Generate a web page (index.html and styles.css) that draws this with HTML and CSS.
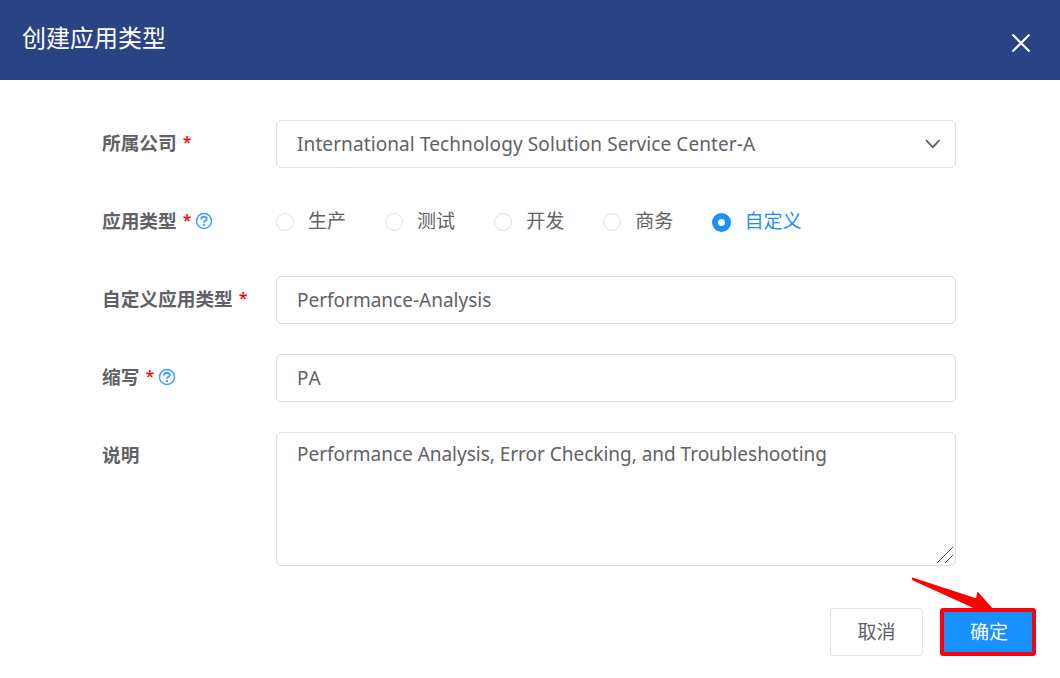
FILE: index.html
```html
<!DOCTYPE html>
<html lang="zh-CN">
<head>
<meta charset="utf-8">
<title>创建应用类型</title>
<link rel="stylesheet" href="styles.css">
</head>
<body>
<div class="dialog">
  <header class="header">
    <h1 class="title">创建应用类型</h1>
    <button class="close" aria-label="关闭"><svg width="20" height="20" viewBox="0 0 20 20"><path d="M1.5 1.5l17 17M18.5 1.5l-17 17" stroke="#fff" stroke-width="2.2" fill="none"/></svg></button>
  </header>
  <form class="form">
    <div class="row">
      <div class="label"><span>所属公司</span><span class="star">*</span></div>
      <div class="field select"><span class="value company">International Technology Solution Service Center-A</span><svg width="16" height="10" viewBox="0 0 16 10"><path d="M1 1.2l6.8 7 6.8-7" stroke="#606266" stroke-width="1.8" fill="none"/></svg></div>
    </div>
    <div class="row">
      <div class="label"><span>应用类型</span><span class="star">*</span><svg class="help" width="18" height="18" viewBox="0 0 18 18"><circle cx="9" cy="9" r="7.5" fill="none" stroke="#409eff" stroke-width="1.5"/><path d="M6.2 7.4C6.2 3.9 11.8 4.1 11.8 7c0 1.7-2.8 1.8-2.8 3.7" fill="none" stroke="#409eff" stroke-width="1.9"/><circle cx="9" cy="12.9" r="1.15" fill="#409eff"/></svg></div>
      <div class="radios">
        <label class="radio"><i class="dot"></i><span>生产</span></label>
        <label class="radio"><i class="dot"></i><span>测试</span></label>
        <label class="radio"><i class="dot"></i><span>开发</span></label>
        <label class="radio"><i class="dot"></i><span>商务</span></label>
        <label class="radio checked"><i class="dot"></i><span>自定义</span></label>
      </div>
    </div>
    <div class="row">
      <div class="label"><span>自定义应用类型</span><span class="star">*</span></div>
      <div class="field"><span class="value">Performance-Analysis</span></div>
    </div>
    <div class="row">
      <div class="label"><span>缩写</span><span class="star">*</span><svg class="help" width="18" height="18" viewBox="0 0 18 18"><circle cx="9" cy="9" r="7.5" fill="none" stroke="#409eff" stroke-width="1.5"/><path d="M6.2 7.4C6.2 3.9 11.8 4.1 11.8 7c0 1.7-2.8 1.8-2.8 3.7" fill="none" stroke="#409eff" stroke-width="1.9"/><circle cx="9" cy="12.9" r="1.15" fill="#409eff"/></svg></div>
      <div class="field"><span class="value short">PA</span></div>
    </div>
    <div class="row">
      <div class="label"><span>说明</span></div>
      <div class="field area"><span class="value note">Performance Analysis, Error Checking, and Troubleshooting</span><svg class="grip" width="18" height="18" viewBox="0 0 18 18"><path d="M1 17L17 1M9 17l8-8" stroke="#505050" stroke-width="1"/></svg></div>
    </div>
  </form>
  <footer class="footer">
    <button class="btn">取消</button>
    <button class="btn primary">确定</button>
  </footer>
  <svg class="arrow" width="86" height="34" viewBox="0 0 86 34"><path d="M2.5.5L66 21.3 67.5 14.5 84 33H62L64.5 31.5 3 3.5Q.8 1.5 2.5.5z" fill="#f00"/></svg>
</div>
</body>
</html>
```
FILE: styles.css
```css
* { box-sizing: border-box; }
body { margin: 0; background: #fff; color: #606266; font: 19px/28px "Noto Sans", "Noto Sans CJK SC", sans-serif; }
.dialog { position: relative; width: 1060px; height: 678px; }
.header { height: 80px; padding: 0 29px 0 22px; background: #2a4385; color: #fff; display: flex; justify-content: space-between; align-items: center; }
.title { margin: 0 0 6px; font-size: 24px; font-weight: 400; line-height: 36px; font-family: "Noto Sans CJK SC", sans-serif; }
.close { padding: 0; margin-top: 6px; border: 0; background: none; display: flex; }
.form { padding: 40px 104px 0 102px; display: flex; flex-direction: column; gap: 30px; }
.row { display: grid; grid-template-columns: 174px 680px; min-height: 48px; }
.label { height: 46px; display: flex; align-items: center; font: bold 18.7px/28px "Noto Sans CJK SC", sans-serif; }
.label > span { padding-bottom: 2px; }
.star { margin-left: 6px; color: #f00; font: 600 16px/28px "Open Sans", sans-serif; }
.help { margin-left: 3.5px; }
.field { height: 48px; padding: 0 20px; border: 1px solid #dcdfe6; border-radius: 5px; display: flex; align-items: center; }
.select { justify-content: space-between; padding-right: 14px; }
.value { white-space: nowrap; }
.company { letter-spacing: .1px; }
.short { letter-spacing: 1px; }
.note { letter-spacing: -.02px; }
.area { position: relative; height: 134px; align-items: flex-start; padding-top: 7px; }
.grip { position: absolute; right: 1px; bottom: 1px; }
.radios { display: flex; align-items: center; gap: 39.1px; font-family: "Noto Sans CJK SC", sans-serif; }
.radio { display: flex; align-items: center; gap: 14px; }
.radio span { padding-bottom: 4px; }
.dot { width: 18px; height: 18px; border: 1px solid #dcdfe6; border-radius: 50%; }
.checked { color: #1890ff; gap: 13px; }
.checked .dot { width: 19px; height: 19px; border: 6.5px solid #1890ff; }
.footer { padding: 42px 24px 0; display: flex; justify-content: flex-end; gap: 17px; }
.btn { width: 93px; height: 48px; padding: 0 0 2px; border: 1px solid #dcdfe6; border-radius: 4px; background: #fff; color: #606266; font: 19px/28px "Noto Sans CJK SC", sans-serif; }
.primary { width: 96px; padding-left: 2px; border: 4px solid #f8000c; border-radius: 3px; background: #1890ff; color: #fff; }
.arrow { position: absolute; left: 910px; top: 577px; }
```
